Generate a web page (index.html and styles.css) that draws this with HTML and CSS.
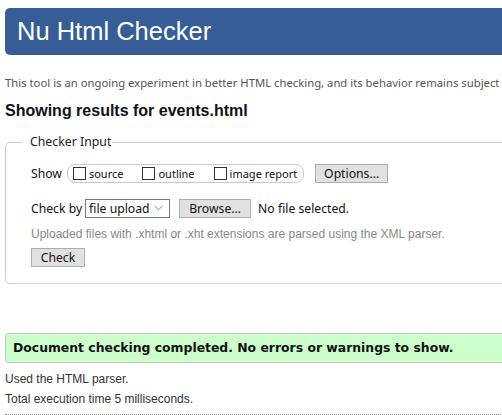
FILE: index.html
```html
<!DOCTYPE html>
<html lang="en">
<head>
<meta charset="utf-8">
<title>Nu Html Checker</title>
<link rel="stylesheet" href="styles.css">
</head>
<body>
<div class="page">
  <h1 class="banner">Nu Html Checker</h1>
  <p class="intro">This tool is an ongoing experiment in better HTML checking, and its behavior remains subject to change</p>
  <h2 class="results">Showing results for events.html</h2>
  <fieldset class="checker">
    <legend class="checker-legend">Checker Input</legend>
    <div class="row row-show">
      <span class="label">Show</span>
      <span class="pill">
        <label class="opt"><span class="cb"></span>source</label>
        <label class="opt"><span class="cb"></span>outline</label>
        <label class="opt"><span class="cb"></span>image report</label>
      </span>
      <span class="btn btn-options">Options...</span>
    </div>
    <div class="row row-check">
      <span class="label">Check by</span>
      <span class="select">file upload<svg class="chev" width="9" height="6" viewBox="0 0 9 6"><polyline points="0.5,0.8 4.5,4.8 8.5,0.8" fill="none" stroke="#8a8a8a" stroke-width="1"/></svg></span>
      <span class="btn btn-browse">Browse...</span>
      <span class="nofile">No file selected.</span>
    </div>
    <p class="hint">Uploaded files with .xhtml or .xht extensions are parsed using the XML parser.</p>
    <span class="btn btn-check">Check</span>
  </fieldset>
  <p class="success">Document checking completed. No errors or warnings to show.</p>
  <p class="meta meta-first">Used the HTML parser.</p>
  <p class="meta">Total execution time 5 milliseconds.</p>
  <div class="dotted"></div>
</div>
</body>
</html>
```
FILE: styles.css
```css
html, body {
  margin: 0;
  padding: 0;
  background: #fff;
  overflow: hidden;
}
body {
  font-family: "Liberation Sans", Arial, sans-serif;
  color: #222;
}
.page {
  width: 620px;
  padding: 8px 0 0 5px;
}
.banner {
  margin: 0;
  height: 47px;
  box-sizing: border-box;
  background: #365d95;
  border-radius: 5px;
  color: #fff;
  font-family: "Liberation Sans", Arial, sans-serif;
  font-weight: normal;
  font-size: 25.5px;
  line-height: 47px;
  padding-left: 12px;
}
.intro {
  margin: 20px 0 0;
  font-family: "Noto Sans", sans-serif;
  font-size: 11.3px;
  line-height: 16px;
  color: #555;
  white-space: nowrap;
}
.results {
  margin: 11px 0 0;
  font-size: 16px;
  font-weight: bold;
  line-height: 18px;
  color: #111;
}
.checker {
  margin: 14px 0 0;
  padding: 13px 25px 16px 25px;
  border: 1px solid #cfcfcf;
  border-radius: 5px;
  min-width: 0;
}
.checker-legend {
  margin-left: -9px;
  padding: 0 1px 0 8px;
  font-family: "Noto Sans", sans-serif;
  font-size: 12.3px;
  line-height: 16px;
  color: #222;
}
.row {
  display: flex;
  align-items: center;
  height: 20px;
  font-family: "Noto Sans", sans-serif;
  font-size: 12.2px;
  color: #111;
}
.row-check {
  margin-top: 15px;
}
.pill {
  display: flex;
  align-items: center;
  margin-left: 5px;
  height: 19px;
  box-sizing: border-box;
  border: 1px solid #c9c9c9;
  border-radius: 8px;
  padding: 0 6px 0 5px;
}
.opt {
  display: flex;
  align-items: center;
  font-size: 11px;
  margin-right: 19px;
}
.opt:last-child {
  margin-right: 0;
}
.cb {
  width: 13px;
  height: 13px;
  box-sizing: border-box;
  border: 1px solid #333;
  margin-right: 3px;
  background: #fff;
}
.btn {
  display: inline-flex;
  align-items: center;
  justify-content: center;
  box-sizing: border-box;
  height: 19px;
  border: 1px solid #adadad;
  background: #e1e1e1;
  font-family: "Noto Sans", sans-serif;
  font-size: 12.2px;
  color: #111;
}
.btn-options {
  margin-left: 11px;
  width: 73px;
}
.select {
  display: inline-flex;
  align-items: center;
  justify-content: space-between;
  box-sizing: border-box;
  margin-left: 3px;
  width: 85px;
  height: 19px;
  border: 1px solid #7a7a7a;
  padding: 0 6px 0 3px;
  background: #fff;
}
.chev {
  display: block;
}
.btn-browse {
  margin-left: 9px;
  width: 72px;
}
.nofile {
  margin-left: 7px;
}
.hint {
  margin: 8px 0 0;
  font-size: 12px;
  line-height: 16px;
  color: #888;
}
.btn-check {
  margin-top: 6px;
  width: 54px;
}
.success {
  margin: 49px 0 0;
  height: 30px;
  box-sizing: border-box;
  background: #ccffcc;
  border: 1px solid #c6c6c6;
  border-radius: 3px;
  padding-left: 7px;
  font-family: "DejaVu Sans", Verdana, sans-serif;
  font-weight: bold;
  font-size: 12.4px;
  line-height: 28px;
  color: #111;
}
.meta {
  margin: 0;
  font-size: 12px;
  line-height: 20px;
  color: #333;
}
.meta-first {
  margin-top: 6px;
}
.dotted {
  margin-top: 5px;
  border-top: 1px dotted #888;
}
```
